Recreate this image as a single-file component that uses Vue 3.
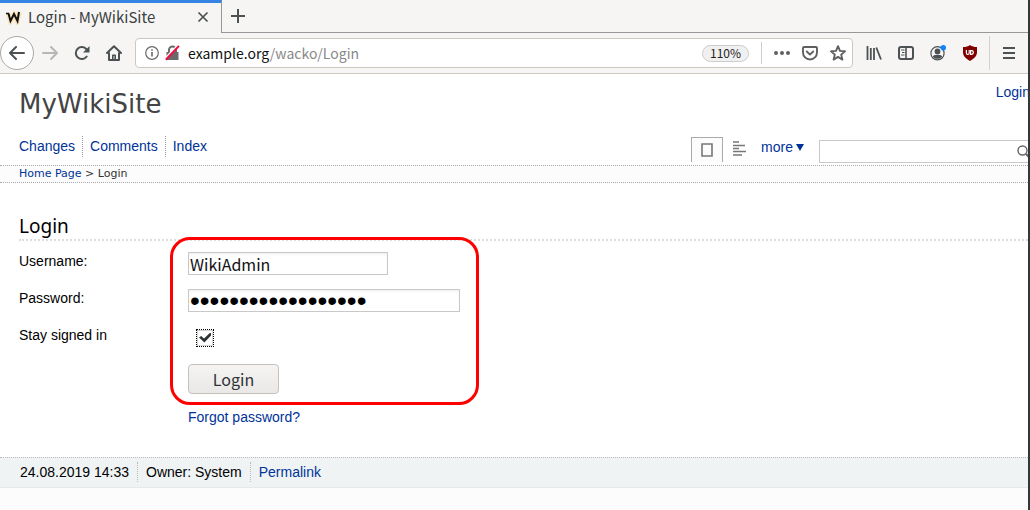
<script setup>
import { ref } from 'vue'

const username = ref('WikiAdmin')
const password = ref('wackowiki-password')
const stay = ref(true)
const query = ref('')
const address = ref('')
const menu = ['Changes', 'Comments', 'Index']
</script>

<template>
  <div class="window">
    <header class="browser">
      <div class="tabs">
        <div class="tab">
          <svg class="favicon" width="16" height="16" viewBox="0 0 16 16" fill="none">
            <path d="M2 4l2.500 8L8 6l3 6 2.500-9" stroke="#fae6bd" stroke-width="5" />
            <path d="M0 4.500h3" stroke="#111" stroke-width="1.500" />
            <path d="M2.500 4.500l2 7.500L8 5l3.500 7L13 3" stroke="#111" stroke-width="2" />
          </svg>
          <span class="tab-title">Login - MyWikiSite</span>
          <button class="bare" aria-label="Close tab">
            <svg width="12" height="12" viewBox="0 0 12 12" fill="none" stroke="#4c5254" stroke-width="1.700"><path d="M1.500 1.500l9 9M10.500 1.500l-9 9" /></svg>
          </button>
        </div>
        <div class="tab-rest">
          <button class="bare" aria-label="New tab">
            <svg width="14" height="14" viewBox="0 0 14 14" fill="none" stroke="#4c5254" stroke-width="2"><path d="M7 0v14M0 7h14" /></svg>
          </button>
        </div>
      </div>

      <nav class="toolbar">
        <button class="bare back" aria-label="Back">
          <svg width="16" height="16" viewBox="0 0 16 16" fill="none" stroke="#4c5254" stroke-width="2" stroke-linecap="round" stroke-linejoin="round"><path d="M15 8H1.500M7 2L1 8l6 6" /></svg>
        </button>
        <button class="bare forward" aria-label="Forward">
          <svg width="16" height="16" viewBox="0 0 16 16" fill="none" stroke="#b7b7b6" stroke-width="2" stroke-linecap="round" stroke-linejoin="round"><path d="M1 8h13.500M9 2l6 6-6 6" /></svg>
        </button>
        <button class="bare" aria-label="Reload">
          <svg width="16" height="16" viewBox="0 0 16 16" fill="none"><path d="M12.700 11.500A6 6 0 1 1 12.500 4.300" stroke="#4c5254" stroke-width="2" stroke-linecap="round" /><path d="M15.500 1v6.500H9z" fill="#4c5254" /></svg>
        </button>
        <button class="bare" aria-label="Home">
          <svg width="16" height="16" viewBox="0 0 16 16" fill="none" stroke="#4c5254" stroke-width="2" stroke-linejoin="round" stroke-linecap="round"><path d="M1 8l7-6.800L15 8M3 8v7h10V8" /><path d="M6.800 14.500v-4.300h2.400v4.300" stroke-width="1.600" /></svg>
        </button>
        <div class="address">
          <svg width="14" height="14" viewBox="0 0 14 14" fill="none"><circle cx="7" cy="7" r="6.300" stroke="#6a6a6a" stroke-width="1.200" /><path d="M7 6v4.500M7 3.200v1.600" stroke="#6a6a6a" stroke-width="1.600" /></svg>
          <svg class="lock" width="15" height="16" viewBox="0 0 15 16" fill="none"><path d="M1.500 7h12v8h-12z" fill="#6a6a6a" /><path d="M4 8V5a3.500 3.500 0 0 1 7 0v3" stroke="#6a6a6a" stroke-width="2" /><path d="M0 13.500L13 0" stroke="#fff" stroke-width="1.600" /><path d="M.800 14.700L14 .900" stroke="#f5083f" stroke-width="2" /></svg>
          <div class="url">
            <span class="url-text">example.org<i>/wacko/Login</i></span>
            <input v-model="address" aria-label="Address" />
          </div>
          <button class="bare zoom">110%</button>
          <span class="divider"></span>
          <button class="bare" aria-label="Page actions">
            <svg width="16" height="16" viewBox="0 0 16 16" fill="#5f6062"><circle cx="2" cy="8" r="2" /><circle cx="8" cy="8" r="2" /><circle cx="14" cy="8" r="2" /></svg>
          </button>
          <button class="bare" aria-label="Save to Pocket">
            <svg width="16" height="16" viewBox="0 0 16 16" fill="none" stroke="#5f6062" stroke-width="1.900" stroke-linecap="round" stroke-linejoin="round"><path d="M2 2h12a1 1 0 0 1 1 1v4.500a7 7 0 0 1-14 0V3a1 1 0 0 1 1-1z" /><path d="M4.800 6.500L8 9.600l3.200-3.100" /></svg>
          </button>
          <button class="bare" aria-label="Bookmark">
            <svg width="16" height="16" viewBox="0 0 16 16" fill="none" stroke="#5f6062" stroke-width="1.900" stroke-linejoin="round"><path d="M8 1.200l2 4.700 5 .400-3.800 3.300 1.200 5L8 11.900l-4.400 2.700 1.200-5L1 6.300l5-.400z" /></svg>
          </button>
        </div>
        <div class="tools">
          <button class="bare" aria-label="Library">
            <svg width="16" height="16" viewBox="0 0 16 16" fill="none" stroke="#4c5254" stroke-width="1.800"><path d="M1.500 1v14M4.800 3v12M8 3v12M10.300 2.500L15 14.500" /></svg>
          </button>
          <button class="bare" aria-label="Sidebars">
            <svg width="16" height="16" viewBox="0 0 16 16" fill="none" stroke="#4c5254"><rect x="1" y="2" width="14" height="12" rx="2" stroke-width="2" /><path d="M8 2v12" stroke-width="1.600" /><path d="M3 5h3.500M4 7.500h2.500M3 10h3.500" /></svg>
          </button>
          <button class="bare" aria-label="Account">
            <svg width="16" height="16" viewBox="0 0 16 16" fill="none"><circle cx="7.500" cy="8.300" r="6.600" stroke="#4c5254" stroke-width="1.200" /><circle cx="7.500" cy="6.500" r="2.900" fill="#4c5254" /><path d="M2.800 11.500c1-1.800 2.400-1.500 4.700-1.500s3.700-.300 4.700 1.500c-1 1.500-2.800 2.300-4.700 2.300s-3.700-.800-4.700-2.300z" fill="#4c5254" /><circle cx="13.300" cy="2.700" r="2.700" fill="#0a84ff" /></svg>
          </button>
          <button class="bare" aria-label="uBlock">
            <svg width="16" height="16" viewBox="0 0 16 16" fill="none"><path d="M8 0c2 1.500 4 2 7 2v5c0 4-2.500 6.500-7 9-4.500-2.500-7-5-7-9V2c3 0 5-.500 7-2z" fill="#800000" /><path d="M4.400 5v2.900q0 1.500 1.400 1.500t1.400-1.500V5M8.600 9.300V5.600h1.300a1.900 1.900 0 0 1 0 3.700z" stroke="#fff" stroke-width="1.200" /></svg>
          </button>
        </div>
        <button class="bare burger" aria-label="Menu">
          <svg width="12" height="12" viewBox="0 0 12 12" stroke="#4c5254" stroke-width="2"><path d="M0 1h12M0 6h12M0 11h12" /></svg>
        </button>
      </nav>
    </header>

    <div class="page">
      <header class="site">
        <div class="brand">
          <div class="site-name">MyWikiSite</div>
          <a class="account" href="#login">Login</a>
        </div>
        <div class="bar">
          <nav class="menu">
            <a v-for="item in menu" :key="item" :href="'#' + item">{{ item }}</a>
          </nav>
          <nav class="modes">
            <a class="mode on" href="#show" aria-label="Show page">
              <svg width="12" height="14" viewBox="0 0 12 14" fill="none" stroke="#777" stroke-width="1.600"><path d="M1 1h10v12H1z" /></svg>
            </a>
            <a class="mode" href="#source" aria-label="Page source">
              <svg width="13" height="15" viewBox="0 0 13 15" fill="none" stroke="#777" stroke-width="1.400"><path d="M0 1h6M0 4.500h12M0 7.500h6M0 10.500h13M0 14h9" /></svg>
            </a>
            <a class="more" href="#more">more<svg width="8" height="8" viewBox="0 0 8 8" fill="#039"><path d="M0 1h8L4 8z" /></svg></a>
          </nav>
          <form class="search" @submit.prevent>
            <input v-model="query" aria-label="Search" />
            <button class="bare" aria-label="Search">
              <svg width="14" height="14" viewBox="0 0 14 14" fill="none" stroke="#666"><circle cx="5.500" cy="5.500" r="4.500" stroke-width="1.400" /><path d="M9 9l4 4" stroke-width="2" /></svg>
            </button>
          </form>
        </div>
      </header>

      <nav class="crumbs"><a href="#home">Home Page</a> &gt; Login</nav>

      <main>
        <h1>Login</h1>
        <form class="login" @submit.prevent>
          <label for="user">Username:</label>
          <div class="field"><input id="user" v-model="username" class="text user" /></div>
          <label for="pass">Password:</label>
          <div class="field"><input id="pass" v-model="password" type="password" class="text pass" /></div>
          <label for="stay">Stay signed in</label>
          <div class="field check"><input id="stay" v-model="stay" type="checkbox" /></div>
          <div class="field"><button class="go">Login</button></div>
          <div class="field"><a href="#forgot">Forgot password?</a></div>
          <div class="highlight"></div>
        </form>
      </main>

      <footer>
        <span>24.08.2019 14:33</span>
        <span>Owner: System</span>
        <span><a href="#permalink">Permalink</a></span>
      </footer>
      <div class="below"></div>
    </div>
  </div>
</template>

<style>
body {
  margin: 0;
  background: #fff;
}
</style>

<style scoped>
.window {
  display: flex;
  flex-direction: column;
  box-sizing: border-box;
  min-height: 100vh;
  overflow: hidden;
  border-right: 2px solid #34383b;
  color: #000;
  font: 14px/20px "Liberation Sans", Arial, sans-serif;
}
a {
  color: #039;
  text-decoration: none;
}
.bare {
  display: flex;
  align-items: center;
  justify-content: center;
  padding: 0;
  border: 0;
  background: none;
  font: inherit;
}
svg {
  display: block;
  flex: none;
}

.browser {
  background: #f6f5f4;
  border-bottom: 1px solid #cdc9c4;
  font-family: "Noto Sans CJK SC", "Noto Sans", sans-serif;
  color: #393f41;
}
.tabs {
  display: flex;
  height: 33px;
}
.tab {
  display: flex;
  align-items: center;
  box-sizing: border-box;
  width: 222px;
  padding: 0 12px 2px 6px;
  border-top: 3px solid #3584e4;
  border-right: 1px solid #979797;
}
.tab-title {
  flex: 1;
  margin-left: 6px;
  font-size: 15px;
  white-space: nowrap;
}
.tab-rest {
  display: flex;
  flex: 1;
  padding-left: 9px;
  border-bottom: 1px solid #979797;
}
.toolbar {
  display: flex;
  align-items: center;
  height: 40px;
}
.toolbar > .bare {
  width: 32px;
}
.toolbar > .back {
  box-sizing: border-box;
  width: 34px;
  height: 34px;
  border: 1px solid #aaa7a3;
  border-radius: 50%;
  background: #fff;
}
.address {
  display: flex;
  flex: 1;
  align-items: center;
  box-sizing: border-box;
  height: 30px;
  margin-left: 5px;
  padding: 0 6px 0 9px;
  gap: 12px;
  border: 1px solid #cdc7c2;
  border-radius: 4px;
  background: #fff;
}
.address .lock {
  margin-left: -6px;
}
.url {
  position: relative;
  flex: 1;
  margin-left: -4px;
  font-size: 14px;
  color: #111;
}
.url i {
  color: #888;
  font-style: normal;
}
.url input {
  position: absolute;
  inset: 0;
  width: 100%;
  padding: 0;
  border: 0;
  background: none;
}
.address .zoom {
  box-sizing: border-box;
  width: 47px;
  height: 17px;
  border: 1px solid #ccc;
  border-radius: 9px;
  background: #f0f0f0;
  color: #222;
  font-size: 12px;
}
.divider {
  width: 1px;
  height: 22px;
  background: #ccc;
}
.tools {
  display: flex;
  gap: 16px;
  padding: 0 11px 0 13px;
}
.toolbar > .burger {
  width: 39px;
  height: 34px;
  border-left: 1px solid #d5d2ce;
}

.page {
  display: flex;
  flex: 1;
  flex-direction: column;
}
.brand {
  display: flex;
  justify-content: space-between;
  height: 59px;
  margin-right: -2px;
  padding-left: 19px;
}
.site-name {
  padding-top: 14px;
  color: #444;
  font: 26px/32px "DejaVu Sans", Verdana, sans-serif;
}
.account {
  padding-top: 8px;
}
.bar {
  display: flex;
  height: 32px;
  margin-right: -6px;
  padding-left: 19px;
}
.menu {
  display: flex;
  flex: 1;
  align-items: flex-start;
  padding-top: 3px;
}
.menu a {
  padding: 0 7px 1px;
  border-right: 1px dotted #999;
}
.menu a:first-child {
  padding-left: 0;
}
.menu a:last-child {
  border: 0;
}
.modes {
  display: flex;
  align-items: flex-start;
  padding-top: 4px;
}
.mode {
  display: flex;
  align-items: center;
  justify-content: center;
  box-sizing: border-box;
  width: 32px;
  height: 22px;
}
.mode.on {
  height: 25px;
  border: 1px solid #aaa;
  border-bottom: 0;
  background: #fcfcfc;
}
.more {
  display: flex;
  align-items: center;
  gap: 3px;
  margin: 0 15px 0 6px;
}
.search {
  display: flex;
  align-items: center;
  box-sizing: border-box;
  width: 215px;
  height: 23px;
  margin-top: 7px;
  padding-right: 2px;
  border: 1px solid #c8c8c8;
  background: #fff;
}
.search input {
  flex: 1;
  min-width: 0;
  border: 0;
  background: none;
}
.crumbs {
  padding-left: 19px;
  border: 1px dotted #aaa;
  border-width: 1px 0;
  background: #fcfcfc;
  color: #333;
  font: 11px/16px "DejaVu Sans", Verdana, sans-serif;
}

main {
  padding: 31px 0 30px 19px;
}
h1 {
  margin: 0;
  padding-bottom: 1px;
  border-bottom: 2px dotted #ddd;
  font: 19px/24px "Noto Sans", sans-serif;
}
.login {
  position: relative;
  display: grid;
  grid-template-columns: 169px 1fr;
  row-gap: 14px;
  padding-top: 11px;
}
.login label {
  line-height: 19px;
}
.field {
  display: flex;
  grid-column: 2;
}
.text {
  box-sizing: border-box;
  height: 23px;
  padding: 0 1px;
  border: 1px solid #c8c8c8;
  outline: 0;
  box-shadow: inset 0 2px 2px #f4f4f4;
  background: #fff;
  color: #111;
  font: 16px/20px "Noto Sans CJK SC", "Noto Sans", sans-serif;
}
.user {
  width: 200px;
}
.pass {
  width: 272px;
  padding-top: 1px;
  color: #000;
  font: 28px/20px "Liberation Sans", Arial, sans-serif;
}
.check {
  padding: 3px 0 3px 8px;
}
.check input {
  appearance: none;
  display: grid;
  box-sizing: border-box;
  width: 18px;
  height: 18px;
  margin: 0;
  place-content: center;
  border: 1px dotted #000;
  background: #fff;
  box-shadow: inset 0 0 0 1px #d8d4d0;
}
.check input:checked::after {
  content: "";
  width: 12px;
  height: 10px;
  background: #2e3436;
  clip-path: polygon(0 45%, 18% 30%, 42% 55%, 90% 0, 100% 0, 100% 25%, 45% 95%);
}
.go {
  width: 91px;
  height: 30px;
  padding: 0;
  border: 1px solid #c5c1bd;
  border-radius: 4px;
  background: linear-gradient(#f5f4f3, #eae8e6);
  color: #2e3436;
  font: 16px/20px "Noto Sans CJK SC", "Noto Sans", sans-serif;
}
.login > .field:nth-last-child(2) {
  margin-top: -1px;
}
.highlight {
  position: absolute;
  top: -4px;
  left: 151px;
  box-sizing: border-box;
  width: 309px;
  height: 168px;
  border: 3px solid #f00;
  border-radius: 20px;
  pointer-events: none;
}
footer {
  display: flex;
  padding: 4px 0 5px 20px;
  border-top: 1px dotted #bbb;
  border-bottom: 1px solid #e6e9ea;
  background: #eff3f4;
}
footer span + span {
  margin-left: 8px;
  padding-left: 8px;
  border-left: 1px dotted #bbb;
}
.below {
  flex: 1;
  background: #fcfcfc;
}
</style>
